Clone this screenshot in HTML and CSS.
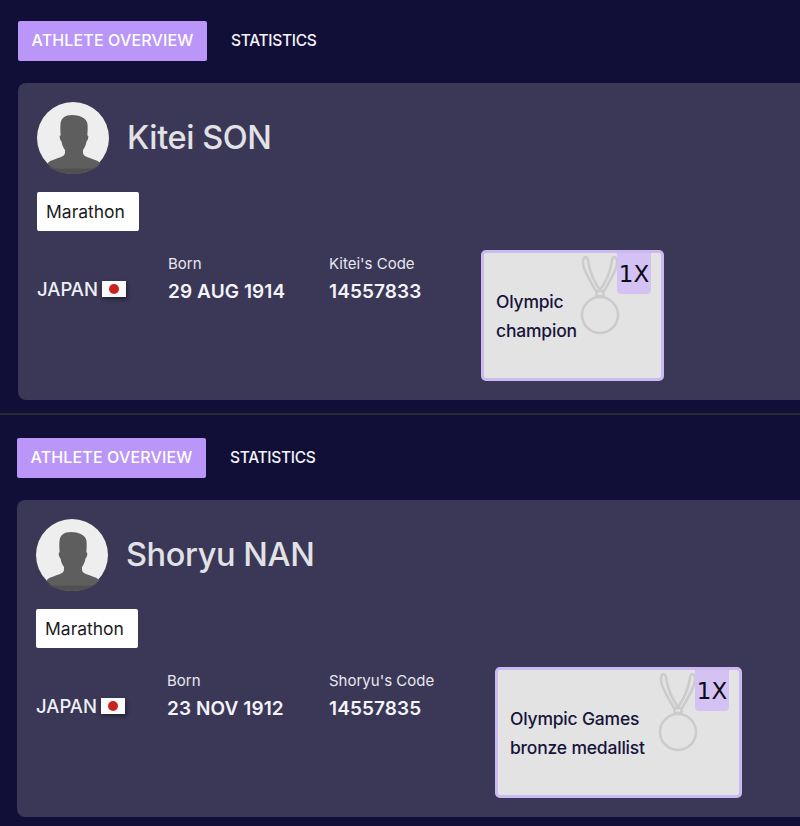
FILE: index.html
```html
<!DOCTYPE html>
<html lang="en">
<head>
<meta charset="utf-8">
<title>Athlete overview</title>
<link rel="stylesheet" href="styles.css">
</head>
<body>
<svg class="defs" width="0" height="0" aria-hidden="true">
  <symbol id="avatar" viewBox="0 0 72 72">
    <circle cx="36" cy="36" r="36" fill="#eeeeee"/>
    <path fill="#5e5e5e" d="M35 13c-7 0-11 3-11.500 9-.3 4-.2 8 .2 11.500-.8-.2-1.200.4-1 1.500.3 2 .8 4 1.800 4.500.5 3 1.600 6 3.500 8.500 .3 3-.2 5-2 6-3 1.700-8 3-11.500 4.500-1.500 .6-3 1.500-4 3C15.500 68 24 72 36 72s20.500-4 27.500-10.500c-1-1.500-2.500-2.400-4-3-3.500-1.500-8.500-2.800-11.500-4.500-1.800-1-2.300-3-2-6 1.900-2.500 3-5.500 3.500-8.500 1-.5 1.500-2.500 1.800-4.500.2-1.100-.2-1.700-1-1.500 .4-3.500 .5-7.500 .2-11.500C50 16 42 13 35 13z"/>
    <path fill="#505050" d="M10 63.500c7 4.500 14 3 26 3s19 1.500 26-3C56 69 46 72 36 72s-20-3-26-8.500z"/>
  </symbol>
  <symbol id="medal" viewBox="0 0 44 82">
    <g fill="none" stroke="#cbcbcb" stroke-width="2.500">
      <path d="M18 36C12 26 6 16 5 9c-.5-4 1-7 2.500-7S10 4 10.500 8C12 18 17 28 22 35"/>
      <path d="M26 36c6-10 12-20 13-27 .5-4-1-7-2.500-7S34 4 33.500 8C32 18 27 28 22 35"/>
      <rect x="18.500" y="36" width="7" height="5"/>
      <circle cx="22" cy="60" r="18"/>
    </g>
  </symbol>
  <symbol id="flag" viewBox="0 0 24 16">
    <rect width="24" height="16" fill="#fafafa"/>
    <circle cx="12" cy="8" r="5" fill="#c9231f"/>
  </symbol>
</svg>

<main class="page">
  <section class="athlete">
    <nav class="tabs">
      <a class="tab tab-active">ATHLETE OVERVIEW</a>
      <a class="tab">STATISTICS</a>
    </nav>
    <article class="card">
      <header class="head">
        <svg class="avatar"><use href="#avatar"/></svg>
        <h1 class="name">Kitei SON</h1>
      </header>
      <span class="tag">Marathon</span>
      <div class="info">
        <div class="country">JAPAN <svg class="flag"><use href="#flag"/></svg></div>
        <div class="fact fact-born">
          <span class="label">Born</span>
          <strong class="value">29 AUG 1914</strong>
        </div>
        <div class="fact fact-code">
          <span class="label">Kitei's Code</span>
          <strong class="value">14557833</strong>
        </div>
        <div class="award award-narrow">
          <p class="award-text">Olympic<br>champion</p>
          <svg class="medal"><use href="#medal"/></svg>
          <span class="count">1X</span>
        </div>
      </div>
    </article>
  </section>

  <hr class="rule">

  <section class="athlete athlete-second">
    <nav class="tabs">
      <a class="tab tab-active">ATHLETE OVERVIEW</a>
      <a class="tab">STATISTICS</a>
    </nav>
    <article class="card">
      <header class="head">
        <svg class="avatar"><use href="#avatar"/></svg>
        <h1 class="name">Shoryu NAN</h1>
      </header>
      <span class="tag">Marathon</span>
      <div class="info">
        <div class="country">JAPAN <svg class="flag"><use href="#flag"/></svg></div>
        <div class="fact fact-born">
          <span class="label">Born</span>
          <strong class="value">23 NOV 1912</strong>
        </div>
        <div class="fact fact-code">
          <span class="label">Shoryu's Code</span>
          <strong class="value">14557835</strong>
        </div>
        <div class="award award-wide">
          <p class="award-text">Olympic Games<br>bronze medallist</p>
          <svg class="medal"><use href="#medal"/></svg>
          <span class="count">1X</span>
        </div>
      </div>
    </article>
  </section>
</main>
</body>
</html>
```

FILE: styles.css
```css
* { box-sizing: border-box; }

html, body {
  margin: 0;
  height: 826px;
  overflow: hidden;
  background: #110f37;
}

body {
  font-family: "Inter", "Liberation Sans", sans-serif;
  color: #ffffff;
}

.defs { display: block; height: 0; }

.page { width: 800px; overflow: hidden; }

.athlete { padding: 21px 0 0 18px; }

.athlete-second { padding: 23px 0 0 17px; }

.tabs {
  display: flex;
  align-items: center;
  gap: 9px;
  height: 40px;
}

.tab {
  display: flex;
  align-items: center;
  height: 40px;
  padding: 0 15px 2px 15px;
  font-size: 15.500px;
  font-weight: 500;
  letter-spacing: -0.3px;
  color: #f4f4f8;
}

.tab-active {
  width: 189px;
  justify-content: center;
  background: #b996f7;
  border-radius: 2px;
  color: #ffffff;
  font-size: 16px;
  letter-spacing: 0.15px;
  white-space: nowrap;
}

.card {
  width: 840px;
  height: 317px;
  margin-top: 22px;
  padding: 19px;
  background: #3a3757;
  border-radius: 8px;
}

.head {
  display: flex;
  align-items: center;
  gap: 18px;
  height: 72px;
}

.avatar { width: 72px; height: 72px; flex: none; }

.name {
  margin: 0 0 2px;
  font-size: 32.500px;
  font-weight: 500;
  letter-spacing: -0.4px;
  color: #e2e2e6;
}

.tag {
  display: flex;
  align-items: center;
  width: 102px;
  height: 39px;
  margin-top: 18px;
  padding-left: 9px;
  background: #ffffff;
  border-radius: 2px;
  color: #1b1b24;
  font-size: 17.500px;
}

.info {
  display: flex;
  align-items: flex-start;
  height: 131px;
  margin-top: 19px;
}

.country {
  display: flex;
  align-items: center;
  gap: 4px;
  width: 131px;
  margin-top: 28px;
  font-size: 18.500px;
  font-weight: 500;
  color: #eef0f6;
}

.flag {
  width: 24px;
  height: 16px;
  box-shadow: 1px 2px 4px rgba(0, 0, 0, 0.45);
}

.fact {
  display: flex;
  flex-direction: column;
  gap: 7px;
  margin-top: 4px;
}

.fact-born { width: 161px; }

.fact-code { width: 152px; }

.athlete-second .fact-born { width: 162px; }

.athlete-second .fact-code { width: 166px; }

.label {
  font-size: 15px;
  color: #e8e8ee;
}

.value {
  font-size: 19px;
  font-weight: 600;
  letter-spacing: 0.1px;
  color: #f4f4f8;
}

.award {
  position: relative;
  display: flex;
  align-items: center;
  height: 131px;
  padding: 1px 0 0 12px;
  background: #e3e3e3;
  border: 3px solid #cdb9f2;
  border-radius: 5px;
}

.award-narrow { width: 183px; }

.award-wide { width: 247px; }

.award-text {
  margin: 0;
  font-size: 17.500px;
  font-weight: 500;
  line-height: 29px;
  letter-spacing: -0.2px;
  color: #17143c;
}

.medal {
  position: absolute;
  top: 2px;
  right: 39px;
  width: 44px;
  height: 82px;
}

.count {
  position: absolute;
  top: 0;
  right: 10px;
  display: flex;
  align-items: center;
  justify-content: center;
  width: 34px;
  height: 41px;
  padding-top: 1px;
  background: #d4c2f5;
  border-radius: 0 0 4px 4px;
  color: #0c0c14;
  font-family: "DejaVu Sans", sans-serif;
  font-size: 23px;
}

.rule {
  height: 2px;
  margin: 13px 0 0;
  border: 0;
  background: #2a2a33;
}
```
